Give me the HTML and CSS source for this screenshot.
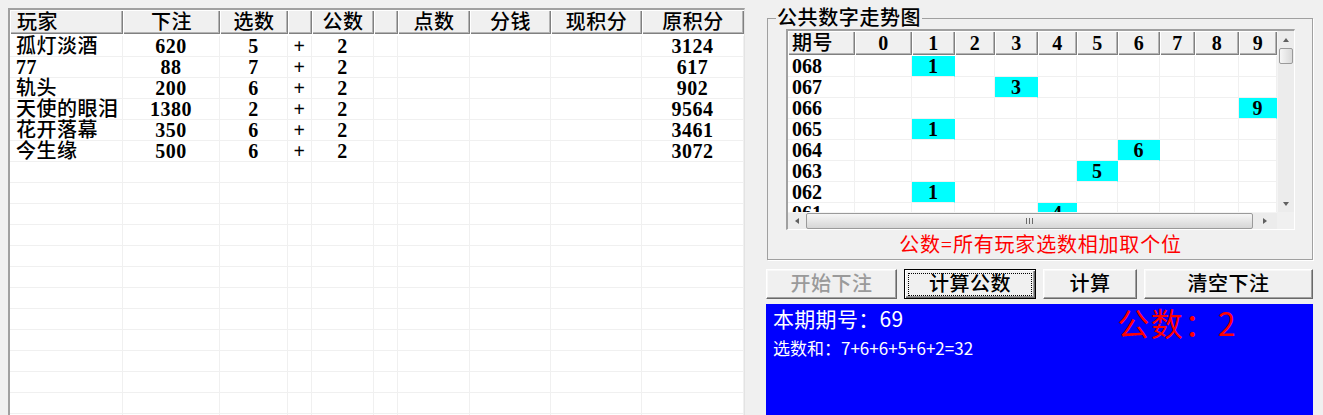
FILE: index.html
```html
<!DOCTYPE html>
<html lang="zh-CN">
<head>
<meta charset="utf-8">
<title>公数</title>
<link rel="stylesheet" href="styles.css">
</head>
<body>
<div class="app">
  <div class="list">
    <div class="lh name">玩家</div><div class="lh">下注</div><div class="lh">选数</div><div class="lh"></div><div class="lh">公数</div><div class="lh"></div><div class="lh">点数</div><div class="lh">分钱</div><div class="lh">现积分</div><div class="lh">原积分</div>

    <div class="lc name">孤灯淡酒</div><div class="lc">620</div><div class="lc">5</div><div class="lc">+</div><div class="lc">2</div><div class="lc"></div><div class="lc"></div><div class="lc"></div><div class="lc"></div><div class="lc">3124</div>
    <div class="lc name num">77</div><div class="lc">88</div><div class="lc">7</div><div class="lc">+</div><div class="lc">2</div><div class="lc"></div><div class="lc"></div><div class="lc"></div><div class="lc"></div><div class="lc">617</div>
    <div class="lc name">轨头</div><div class="lc">200</div><div class="lc">6</div><div class="lc">+</div><div class="lc">2</div><div class="lc"></div><div class="lc"></div><div class="lc"></div><div class="lc"></div><div class="lc">902</div>
    <div class="lc name">天使的眼泪</div><div class="lc">1380</div><div class="lc">2</div><div class="lc">+</div><div class="lc">2</div><div class="lc"></div><div class="lc"></div><div class="lc"></div><div class="lc"></div><div class="lc">9564</div>
    <div class="lc name">花开落幕</div><div class="lc">350</div><div class="lc">6</div><div class="lc">+</div><div class="lc">2</div><div class="lc"></div><div class="lc"></div><div class="lc"></div><div class="lc"></div><div class="lc">3461</div>
    <div class="lc name">今生缘</div><div class="lc">500</div><div class="lc">6</div><div class="lc">+</div><div class="lc">2</div><div class="lc"></div><div class="lc"></div><div class="lc"></div><div class="lc"></div><div class="lc">3072</div>

    <div class="lf"></div><div class="lf"></div><div class="lf"></div><div class="lf"></div><div class="lf"></div><div class="lf"></div><div class="lf"></div><div class="lf"></div><div class="lf"></div><div class="lf"></div>
  </div>

  <div class="side">
    <fieldset class="group">
      <legend>公共数字走势图</legend>
      <div class="trend">
        <div class="trend-view">
          <div class="tgrid">
            <div class="th name">期号</div><div class="th">0</div><div class="th">1</div><div class="th">2</div><div class="th">3</div><div class="th">4</div><div class="th">5</div><div class="th">6</div><div class="th">7</div><div class="th">8</div><div class="th">9</div>

            <div class="tc name">068</div><div class="tc"></div><div class="tc hit">1</div><div class="tc"></div><div class="tc"></div><div class="tc"></div><div class="tc"></div><div class="tc"></div><div class="tc"></div><div class="tc"></div><div class="tc"></div>
            <div class="tc name">067</div><div class="tc"></div><div class="tc"></div><div class="tc"></div><div class="tc hit">3</div><div class="tc"></div><div class="tc"></div><div class="tc"></div><div class="tc"></div><div class="tc"></div><div class="tc"></div>
            <div class="tc name">066</div><div class="tc"></div><div class="tc"></div><div class="tc"></div><div class="tc"></div><div class="tc"></div><div class="tc"></div><div class="tc"></div><div class="tc"></div><div class="tc"></div><div class="tc hit">9</div>
            <div class="tc name">065</div><div class="tc"></div><div class="tc hit">1</div><div class="tc"></div><div class="tc"></div><div class="tc"></div><div class="tc"></div><div class="tc"></div><div class="tc"></div><div class="tc"></div><div class="tc"></div>
            <div class="tc name">064</div><div class="tc"></div><div class="tc"></div><div class="tc"></div><div class="tc"></div><div class="tc"></div><div class="tc"></div><div class="tc hit">6</div><div class="tc"></div><div class="tc"></div><div class="tc"></div>
            <div class="tc name">063</div><div class="tc"></div><div class="tc"></div><div class="tc"></div><div class="tc"></div><div class="tc"></div><div class="tc hit">5</div><div class="tc"></div><div class="tc"></div><div class="tc"></div><div class="tc"></div>
            <div class="tc name">062</div><div class="tc"></div><div class="tc hit">1</div><div class="tc"></div><div class="tc"></div><div class="tc"></div><div class="tc"></div><div class="tc"></div><div class="tc"></div><div class="tc"></div><div class="tc"></div>
            <div class="tc name">061</div><div class="tc"></div><div class="tc"></div><div class="tc"></div><div class="tc"></div><div class="tc hit">4</div><div class="tc"></div><div class="tc"></div><div class="tc"></div><div class="tc"></div><div class="tc"></div>
          </div>
        </div>
        <div class="vscroll">
          <div class="sbtn"><span class="tri up"></span></div>
          <div class="vthumb"></div>
          <div class="vspace"></div>
          <div class="sbtn"><span class="tri down"></span></div>
        </div>
        <div class="hscroll">
          <div class="sbtn"><span class="tri left"></span></div>
          <div class="hthumb"><span class="grip"></span></div>
          <div class="sbtn wide"><span class="tri right"></span></div>
        </div>
        <div class="corner"></div>
      </div>
      <div class="rule">公数=所有玩家选数相加取个位</div>
    </fieldset>

    <div class="buttons">
      <button class="btn disabled b1" disabled>开始下注</button>
      <button class="btn default b2"><span class="focus">计算公数</span></button>
      <button class="btn b3">计算</button>
      <button class="btn b4">清空下注</button>
    </div>

    <div class="panel">
      <div class="info">
        <div class="period">本期期号：69</div>
        <div class="sumline">选数和：7+6+6+5+6+2=32</div>
      </div>
      <div class="result">公数：2</div>
    </div>
  </div>
</div>
</body>
</html>
```

FILE: styles.css
```css
html, body {
  margin: 0;
  height: 415px;
  overflow: hidden;
  background: #f0f0f0;
}

.app {
  display: flex;
  align-items: flex-start;
  gap: 21px;
  padding: 8px 0 0 8px;
  font-family: "Liberation Serif", "Noto Sans CJK SC", serif;
  font-size: 20px;
  color: #000;
}

/* ---------- left list ---------- */
.list {
  display: grid;
  grid-template-columns: 113px 97px 68px 24px 62px 24px 72px 81px 91px 102px;
  width: 734px;
  background: #fff;
  border-top: 2px solid #a0a0a0;
  border-left: 2px solid #a0a0a0;
  border-right: 1px solid #e3e3e3;
  font-weight: bold;
}

.lh {
  height: 24px;
  line-height: 24px;
  margin-bottom: 2px;
  text-align: center;
  letter-spacing: 0.5px;
  font-weight: 500;
  background: #f0f0f0;
  box-shadow: inset 1px 1px 0 #fff, inset -1px -1px 0 #808080, inset -2px -2px 0 #b4b4b4;
}

.lh.name {
  text-align: left;
  padding-left: 7px;
}

.lc {
  height: 20px;
  line-height: 20px;
  text-align: center;
  letter-spacing: 0.5px;
  border-right: 1px solid #f0f0f0;
  border-bottom: 1px solid #f0f0f0;
  white-space: nowrap;
}

.lc.name {
  text-align: left;
  padding-left: 6px;
  font-weight: 500;
}

.lc.name.num {
  font-weight: bold;
}

.lf {
  height: 260px;
  border-right: 1px solid #f0f0f0;
  background: repeating-linear-gradient(to bottom, transparent 0 20px, #f0f0f0 20px 21px);
}

/* ---------- right side ---------- */
.side {
  width: 547px;
  display: flex;
  flex-direction: column;
}

.group {
  margin: 0 0 0 1px;
  padding: 1px 17px 4px 18px;
  border: 1px solid #a0a0a0;
  box-shadow: 1px 1px 0 #fff;
  min-width: 0;
}

.group legend {
  padding: 0 1px;
  margin-left: -10px;
  line-height: 20px;
  font-size: 20px;
  letter-spacing: 0.6px;
  font-weight: 500;
}

.trend {
  display: grid;
  grid-template-columns: 489px 17px;
  grid-template-rows: 181px 17px;
  width: 506px;
  border-top: 2px solid #a0a0a0;
  border-left: 2px solid #a0a0a0;
  border-right: 1px solid #fff;
  border-bottom: 1px solid #fff;
  background: #fff;
}

.trend-view {
  overflow: hidden;
}

.tgrid {
  display: grid;
  grid-template-columns: 67px 57px 43px 40px 43px 39px 41px 42px 35px 44px 38px;
  font-weight: bold;
}

.th {
  height: 24px;
  line-height: 24px;
  margin-bottom: 1px;
  text-align: center;
  background: #f0f0f0;
  box-shadow: inset 1px 1px 0 #fff, inset -1px -1px 0 #808080, inset -2px -2px 0 #b4b4b4;
  letter-spacing: 0.5px;
}

.th.name {
  text-align: left;
  padding-left: 4px;
  font-weight: 500;
}

.tc {
  height: 20px;
  line-height: 20px;
  text-align: center;
  border-right: 1px solid #f0f0f0;
  border-bottom: 1px solid #f0f0f0;
}

.tc.name {
  text-align: left;
  padding-left: 4px;
}

.tc.hit {
  background: #00ffff;
  border-right-color: #00ffff;
}

/* scrollbars */
.vscroll {
  display: flex;
  flex-direction: column;
  background: #ececec;
  border-left: 1px solid #f4f4f4;
}

.vspace { flex: 1; }

.hscroll {
  display: flex;
  background: #ececec;
  border-top: 1px solid #f4f4f4;
}

.corner {
  background: #f0f0f0;
}

.sbtn {
  width: 17px;
  height: 17px;
  display: flex;
  align-items: center;
  justify-content: center;
  flex: none;
}

.vscroll .sbtn { width: 16px; }
.hscroll .sbtn { height: 16px; }

.sbtn.wide {
  width: 24px;
}

.tri {
  width: 0;
  height: 0;
  display: block;
}

.tri.up    { border-left: 3.5px solid transparent; border-right: 3.5px solid transparent; border-bottom: 4px solid #606060; }
.tri.down  { border-left: 3.5px solid transparent; border-right: 3.5px solid transparent; border-top: 4px solid #606060; }
.tri.left  { border-top: 3.5px solid transparent; border-bottom: 3.5px solid transparent; border-right: 4px solid #606060; }
.tri.right { border-top: 3.5px solid transparent; border-bottom: 3.5px solid transparent; border-left: 4px solid #606060; }

.vthumb {
  height: 14px;
  margin: 0 1px;
  border: 1px solid #9a9a9a;
  border-radius: 2px;
  background: linear-gradient(to right, #f6f6f6, #d9d9d9);
}

.hthumb {
  width: 445px;
  height: 14px;
  margin-left: 1px;
  border: 1px solid #9a9a9a;
  border-radius: 2px;
  background: linear-gradient(to bottom, #f6f6f6, #d6d6d6);
  display: flex;
  align-items: center;
  justify-content: center;
}

.grip {
  width: 7px;
  height: 6px;
  background: repeating-linear-gradient(to right, #6a6a6a 0 1px, transparent 1px 3px);
}

.rule {
  margin-top: 5px;
  text-align: center;
  color: #ff0000;
  line-height: 20px;
  letter-spacing: 0.8px;
}

/* buttons */
.buttons {
  display: flex;
  gap: 7px;
  margin-top: 9px;
}

.btn {
  height: 30px;
  padding: 0;
  font-family: "Liberation Serif", "Noto Sans CJK SC", serif;
  font-size: 20px;
  font-weight: 500;
  line-height: 20px;
  letter-spacing: 0.5px;
  color: #000;
  background: #f0f0f0;
  border: 1px solid;
  border-color: #fff #696969 #696969 #fff;
  box-shadow: inset -1px -1px 0 #a0a0a0, inset 1px 1px 0 #f8f8f8;
  border-radius: 0;
}

.b1 { width: 131px; }
.b2 { width: 132px; }
.b3 { width: 94px; }
.b4 { width: 169px; }

.btn.disabled {
  color: #9a9a9a;
}

.btn.default {
  border-color: #000;
  box-shadow: inset 1px 1px 0 #fff, inset -1px -1px 0 #696969, inset -2px -2px 0 #a0a0a0;
  padding: 3px 3px 2px 3px;
}

.focus {
  display: block;
  height: 21px;
  line-height: 21px;
  border: 1px dotted #000;
}

/* blue panel */
.panel {
  margin-top: 5px;
  height: 120px;
  background: #0000ff;
  display: flex;
  align-items: flex-start;
  padding: 2px 0 0 7px;
  font-family: "Noto Sans CJK SC", sans-serif;
}

.period {
  color: #fff;
  font-size: 21px;
  line-height: 24px;
  letter-spacing: 0.3px;
}

.sumline {
  margin-top: 8px;
  color: #fff;
  font-size: 17px;
  line-height: 20px;
}

.result {
  margin-left: auto;
  margin-right: 76px;
  color: #ff0000;
  font-size: 32px;
  line-height: 32px;
  letter-spacing: 1.5px;
}
```
